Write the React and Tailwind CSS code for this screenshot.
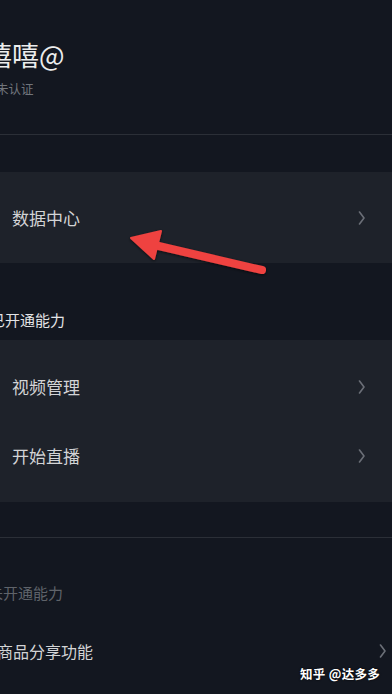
import React from 'react';

const Chevron = ({ className = '' }) => (
    <svg width="8" height="14" viewBox="0 0 8 14" className={className}>
        <polyline points="1.5,1 6,7 1.5,13" fill="none" stroke="#6b6f77" strokeWidth="1.6" strokeLinecap="round" strokeLinejoin="round" />
    </svg>
);

const Row = ({ label }) => (
    <div className="flex items-center justify-between h-[69px] pl-[12px] pr-[26px]">
        <span className="text-[17px] text-[#d3d4d6]">{label}</span>
        <Chevron />
    </div>
);

export default function App() {
    return (
        <div
            className="relative w-[392px] h-[694px] overflow-hidden bg-[#131720]"
            style={{ fontFamily: '"Noto Sans CJK SC", "Noto Sans", sans-serif' }}
        >
            {/* profile header */}
            <div className="h-[134px] pt-[37px]">
                <div className="-ml-[15px] text-[27px] leading-[36px] text-[#eceded]">嘻嘻@</div>
                <div className="-ml-[4px] mt-[7px] text-[12.5px] leading-[18px] text-[#71757c]">未认证</div>
            </div>
            <div className="h-px bg-[#2b2f37]" />

            <div className="h-[37px]" />
            <div className="bg-[#1e222a] h-[91px] flex items-center justify-between pl-[12px] pr-[26px]">
                <span className="text-[17px] text-[#d3d4d6]">数据中心</span>
                <Chevron />
            </div>

            <div className="h-[77px] flex items-end pb-[9px]">
                <span className="-ml-[10px] text-[15px] leading-[22px] text-[#e3e4e6]">已开通能力</span>
            </div>

            <div className="bg-[#1e222a] py-[12px]">
                <Row label="视频管理" />
                <Row label="开始直播" />
            </div>

            <div className="h-[35px]" />
            <div className="h-px bg-[#2b2f37]" />

            <div className="h-[66px] flex items-end">
                <span className="-ml-[12px] text-[15px] leading-[22px] text-[#5f636a]">未开通能力</span>
            </div>
            <div className="h-[58px] flex items-center justify-between pr-[5px] mt-[18px]">
                <span className="-ml-[3px] text-[16px] text-[#d3d4d6]">商品分享功能</span>
                <Chevron />
            </div>

            {/* annotation arrow */}
            <svg className="absolute left-0 top-0 pointer-events-none" width="392" height="694">
                <defs>
                    <filter id="sh" x="-20%" y="-20%" width="140%" height="140%">
                        <feDropShadow dx="0" dy="1" stdDeviation="1.5" floodColor="#000" floodOpacity="0.6" />
                    </filter>
                </defs>
                <g filter="url(#sh)">
                    <line x1="262" y1="270" x2="150" y2="244" stroke="#ef4340" strokeWidth="8" strokeLinecap="round" />
                    <polygon points="131,238 161,231 154,259" fill="#ef4340" stroke="#ef4340" strokeWidth="2" strokeLinejoin="round" />
                </g>
            </svg>

            {/* watermark */}
            <div
                className="absolute left-[300px] top-[665px] text-[12.5px] font-bold text-white tracking-[0.3px]"
                style={{ textShadow: '0 0 2px #000' }}
            >
                知乎 @达多多
            </div>
        </div>
    );
}
